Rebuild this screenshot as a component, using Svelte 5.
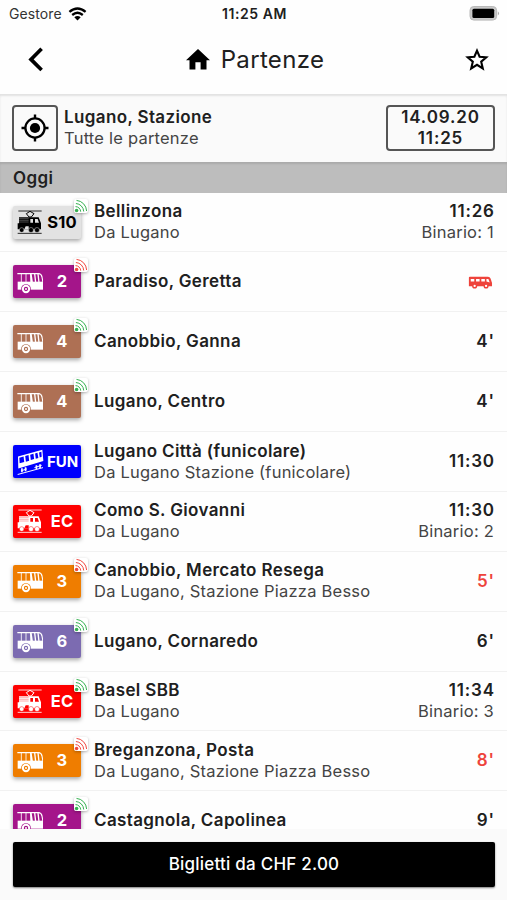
<script>
	const departures = [
		{ line: 'S10', icon: 'train', color: 'grey', signal: 'green', to: 'Bellinzona', from: 'Da Lugano', time: '11:26', track: 'Binario: 1' },
		{ line: '2', icon: 'bus', color: 'magenta', signal: 'red', to: 'Paradiso, Geretta', vehicle: true },
		{ line: '4', icon: 'bus', color: 'brown', signal: 'green', to: 'Canobbio, Ganna', time: "4'" },
		{ line: '4', icon: 'bus', color: 'brown', signal: 'green', to: 'Lugano, Centro', time: "4'" },
		{ line: 'FUN', icon: 'funicular', color: 'blue', to: 'Lugano Città (funicolare)', from: 'Da Lugano Stazione (funicolare)', time: '11:30' },
		{ line: 'EC', icon: 'train', color: 'red', to: 'Como S. Giovanni', from: 'Da Lugano', time: '11:30', track: 'Binario: 2' },
		{ line: '3', icon: 'bus', color: 'orange', signal: 'red', to: 'Canobbio, Mercato Resega', from: 'Da Lugano, Stazione Piazza Besso', time: "5'", late: true },
		{ line: '6', icon: 'bus', color: 'violet', signal: 'green', to: 'Lugano, Cornaredo', time: "6'" },
		{ line: 'EC', icon: 'train', color: 'red', signal: 'green', to: 'Basel SBB', from: 'Da Lugano', time: '11:34', track: 'Binario: 3' },
		{ line: '3', icon: 'bus', color: 'orange', signal: 'red', to: 'Breganzona, Posta', from: 'Da Lugano, Stazione Piazza Besso', time: "8'", late: true },
		{ line: '2', icon: 'bus', color: 'magenta', signal: 'green', to: 'Castagnola, Capolinea', time: "9'" }
	]
</script>

<div class="screen">
	<div class="status-bar">
		<span class="carrier">
			Gestore
			<svg width="19" height="14" viewBox="0 0 19 14">
				<path d="M1.4 4.9 Q9.5 -2 17.6 4.9 M4.2 8 Q9.5 3.6 14.8 8" fill="none" stroke="#000" stroke-width="2.3" />
				<path d="M9.5 13.6 L6.3 10.3 Q9.5 7.7 12.7 10.3 Z" />
			</svg>
		</span>
		<span class="clock">11:25 AM</span>
		<svg class="battery" width="31" height="15" viewBox="0 0 31 15">
			<rect x="1" y="0.5" width="26.6" height="13.6" rx="3.8" fill="#c9c9c9" stroke="#b9b9b9" stroke-width="1" />
			<rect x="3.4" y="2.7" width="21.8" height="9.2" rx="1.5" />
			<path d="M28.8 5.2 Q31.2 7.4 28.8 9.6 Z" fill="#aaa" />
		</svg>
	</div>

	<header class="nav">
		<button class="icon-btn" aria-label="Indietro">
			<svg width="16" height="25" viewBox="0 0 16 25"><path d="M13.6 1.8 L3 12.4 L13.6 23" fill="none" stroke="#000" stroke-width="3.7" /></svg>
		</button>
		<h1>
			<svg width="24" height="21" viewBox="0 0 24 21"><path d="M12 0 L24 11.2 H20.5 V20.6 H14.6 V13.3 H9.4 V20.6 H3.5 V11.2 H0 Z" /></svg>
			<span>Partenze</span>
		</h1>
		<button class="icon-btn" aria-label="Preferiti">
			<svg width="24" height="23" viewBox="0 0 24 23"><path d="M12 2.7 L14.6 8.7 L21.3 9.3 L16.2 13.7 L17.8 20.4 L12 16.8 L6.2 20.4 L7.8 13.7 L2.7 9.3 L9.4 8.7 Z" fill="none" stroke="#000" stroke-width="2.1" /></svg>
		</button>
	</header>

	<section class="stop">
		<button class="locate" aria-label="Posizione">
			<svg width="28" height="28" viewBox="0 0 28 28">
				<circle cx="14" cy="14" r="9.6" fill="none" stroke="#000" stroke-width="2.3" />
				<circle cx="14" cy="14" r="5.1" />
				<path d="M14 0.5 V4.5 M14 23.5 V27.5 M0.5 14 H4.5 M23.5 14 H27.5" stroke="#000" stroke-width="2.4" />
			</svg>
		</button>
		<div class="stop-text">
			<strong>Lugano, Stazione</strong>
			<span>Tutte le partenze</span>
		</div>
		<button class="date">
			<span>14.09.20</span>
			<span>11:25</span>
		</button>
	</section>

	<h2 class="day">Oggi</h2>

	<div class="list">
		{#each departures as d}
			<div class="row">
				<div class="badge {d.color}">
					{#if d.icon === 'train'}
						<svg class="pict" viewBox="0 0 78 72">
							<path d="M4 3 H74 M2 70 H74" stroke="currentColor" stroke-width="2.5" />
							<path d="M28 11 L39 4 L51 11 L43 21 H36 Z" fill="none" stroke="currentColor" stroke-width="3" />
							<path d="M6 22 H65 L72 40 V58 H2 V40 H6 Z" fill="currentColor" />
							<path d="M6 26 H35 M6 31 H35 M6 36 H35" stroke="var(--bg)" stroke-width="1.6" opacity="0.6" />
							<path d="M40 27 H48 V38 H40 Z M54 27 H62 L66 38 H54 Z" fill="var(--bg)" />
							<path d="M26 49 H35 V58 H22 Z" fill="var(--bg)" />
							<g fill="currentColor" stroke="var(--bg)" stroke-width="1.4">
								<circle cx="14" cy="60" r="7" />
								<circle cx="42" cy="60" r="7.5" />
								<circle cx="60" cy="60" r="7.5" />
							</g>
						</svg>
					{:else if d.icon === 'bus'}
						<svg class="pict" viewBox="0 0 78 72">
							<path d="M1 11 H66 Q73 12 75 21 L78 37" fill="none" stroke="currentColor" stroke-width="3.5" />
							<path d="M13 11 V36 M27 11 V36" stroke="currentColor" stroke-width="2.5" />
							<path d="M39 11 H44 L48 38 H40 Z M51 11 H55 L58 38 H54 Z M61 11 H65 L68 38 H64 Z" fill="currentColor" />
							<path d="M2 35 H78 V59 H2 Z" fill="currentColor" />
							<circle cx="27" cy="57" r="14.5" fill="var(--bg)" />
							<circle cx="27" cy="57" r="9.5" fill="none" stroke="currentColor" stroke-width="6" />
							<circle cx="27" cy="57" r="3" fill="currentColor" />
						</svg>
					{:else}
						<svg class="pict fun" viewBox="0 0 82 78">
							<path d="M3 22 L77 2 L80 36 L4 59 Z" fill="currentColor" />
							<path d="M7 26 L20 22 L22 39 L8 43 Z M25 21 L35 18 L37 35 L27 38 Z M40 17 L50 14 L52 30 L42 33 Z M55 13 L62 11 L65 27 L57 29 Z M67 10 L74 8 L75 23 L69 25 Z" fill="var(--bg)" />
							<path d="M12 66 L30 60 M53 56 L75 49 M2 77 L79 56" stroke="currentColor" stroke-width="3" />
							<path d="M15 58 V70 M26 55 V67 M59 49 V60 M70 46 V57" stroke="currentColor" stroke-width="5" />
						</svg>
					{/if}
					<span class="line" class:fun-line={d.icon === 'funicular'}>{d.line}</span>
					{#if d.signal}
						<span class="signal {d.signal}">
							<svg width="14" height="14" viewBox="0 0 14 14">
								<circle cx="2.6" cy="11.5" r="1.8" fill="currentColor" />
								<path d="M1.5 7.6 A5.2 5.2 0 0 1 6.7 12.7 M1.9 4.5 A8.3 8.3 0 0 1 9.7 12.5 M2.5 1.4 A11 11 0 0 1 12.6 12" fill="none" stroke="currentColor" stroke-width="1" />
							</svg>
						</span>
					{/if}
				</div>
				<div class="names">
					<strong>{d.to}</strong>
					{#if d.from}<span>{d.from}</span>{/if}
				</div>
				<div class="when" class:late={d.late}>
					{#if d.vehicle}
						<svg class="van" width="25" height="13" viewBox="0 0 26 14">
							<path d="M0.5 1.7 Q0.5 0.7 1.5 0.7 H21 Q23.5 0.7 24.3 4 L25.4 7.5 V11 H0.5 Z" fill="#ee433b" />
							<path d="M2.5 3.3 H6.3 V6 H2.5 Z M8.2 3.3 H12 V6 H8.2 Z M13.9 3.3 H17.7 V6 H13.9 Z M19.4 3.3 H21.5 L22.9 7 L19.4 5.8 Z" fill="#fff" />
							<circle cx="6.7" cy="10.7" r="2" fill="#fff" stroke="#ee433b" stroke-width="1.5" />
							<circle cx="19" cy="10.7" r="2" fill="#fff" stroke="#ee433b" stroke-width="1.5" />
						</svg>
					{:else}
						<strong>{d.time}</strong>
						{#if d.track}<span>{d.track}</span>{/if}
					{/if}
				</div>
			</div>
		{/each}
	</div>

	<footer>
		<button class="tickets">Biglietti da CHF 2.00</button>
	</footer>
</div>

<style>
	:global(body) {
		background: #fff;
	}
	.screen {
		width: 507px;
		height: 900px;
		display: flex;
		flex-direction: column;
		overflow: hidden;
		background: #fefefe;
		color: #202020;
		font-family: Inter, sans-serif;
		font-size: 16.5px;
		line-height: 21px;
		letter-spacing: 0.22px;
	}
	button {
		font: inherit;
		letter-spacing: inherit;
		color: inherit;
		background: none;
		border: 0;
		padding: 0;
	}
	strong {
		font-size: 17px;
		font-weight: 600;
		letter-spacing: 0.37px;
	}
	svg {
		display: block;
		flex-shrink: 0;
	}

	/* Status bar and title */
	.status-bar {
		height: 27px;
		flex-shrink: 0;
		display: grid;
		grid-template-columns: 1fr auto 1fr;
		align-items: center;
		padding: 0 7px 0 9px;
		font-size: 14px;
		letter-spacing: 0.1px;
	}
	.carrier {
		display: flex;
		align-items: center;
		gap: 6px;
		color: #333;
	}
	.clock {
		font-weight: 600;
		letter-spacing: 0.55px;
	}
	.battery {
		justify-self: end;
	}
	.nav {
		height: 67px;
		flex-shrink: 0;
		box-sizing: border-box;
		display: flex;
		align-items: center;
		justify-content: space-between;
		padding: 0 17px 2px 23px;
	}
	.icon-btn {
		width: 25px;
		display: flex;
		justify-content: center;
	}
	h1 {
		margin: 0 3px 0 0;
		display: flex;
		align-items: center;
		gap: 11px;
		font-size: 24px;
		font-weight: 400;
		line-height: 30px;
		letter-spacing: 0.35px;
	}

	/* Selected stop */
	.stop {
		height: 68px;
		flex-shrink: 0;
		box-sizing: border-box;
		display: flex;
		align-items: center;
		gap: 6px;
		padding: 0 12px;
		background: #fafafa;
		box-shadow: inset 0 2px 2px #e2e2e2;
	}
	.locate,
	.date {
		height: 46px;
		box-sizing: border-box;
		display: flex;
		align-items: center;
		justify-content: center;
		border: 2px solid #555;
		border-radius: 4px;
	}
	.locate {
		width: 46px;
	}
	.stop-text {
		flex: 1;
		display: flex;
		flex-direction: column;
	}
	.stop-text span,
	.names span,
	.when span {
		color: #444;
	}
	.date {
		width: 109px;
		flex-direction: column;
		font-size: 17px;
		font-weight: 600;
		letter-spacing: 0.85px;
	}
	.day {
		height: 30.6px;
		flex-shrink: 0;
		box-sizing: border-box;
		margin: 0;
		padding: 6px 13px;
		background: #bdbdbd;
		box-shadow: inset 0 2px 2px #aaa;
		font-size: 17px;
		font-weight: 600;
		letter-spacing: 0.4px;
	}

	/* Departures */
	.list {
		flex: 1;
		min-height: 0;
		overflow: hidden;
	}
	.row {
		height: 59.88px;
		box-sizing: border-box;
		display: flex;
		align-items: center;
		padding: 0 13px;
		border-bottom: 1px solid #f1f1f1;
	}
	.badge {
		position: relative;
		width: 68px;
		height: 33px;
		box-sizing: border-box;
		flex-shrink: 0;
		display: flex;
		align-items: center;
		padding-left: 4px;
		margin-right: 13px;
		background: var(--bg);
		color: #fff;
		border-radius: 2px;
		box-shadow: 0 2px 4px rgba(0, 0, 0, 0.35);
	}
	.grey { --bg: #e2e2e2; color: #000; }
	.magenta { --bg: #a4158a; }
	.brown { --bg: #ae7054; }
	.blue { --bg: #0000fe; }
	.badge.red { --bg: #fe0000; }
	.orange { --bg: #ef7d00; }
	.violet { --bg: #7c6bb1; }
	.pict {
		width: 26px;
		height: 24px;
	}
	.pict.fun {
		width: 27px;
		height: 26px;
	}
	.line {
		flex: 1;
		text-align: center;
		font-weight: 700;
	}
	.fun-line {
		font-size: 15px;
		letter-spacing: 0;
	}
	.signal {
		position: absolute;
		top: -7px;
		right: -7px;
		width: 14px;
		height: 14px;
		background: #fff;
		border-radius: 2px;
		box-shadow: 0 1px 3px rgba(0, 0, 0, 0.3);
	}
	.signal.green { color: #35b050; }
	.signal.red { color: #f0473f; }
	.names {
		flex: 1;
		display: flex;
		flex-direction: column;
	}
	.when {
		display: flex;
		flex-direction: column;
		align-items: flex-end;
	}
	.when strong {
		letter-spacing: 0.8px;
		margin-right: -0.8px;
	}
	.when.late strong {
		color: #ee433b;
	}
	.van {
		margin: 2px 1px 0 0;
	}

	/* Ticket button */
	footer {
		height: 71px;
		flex-shrink: 0;
		box-sizing: border-box;
		padding: 13px 12px 0 13px;
		background: #fafafa;
	}
	.tickets {
		width: 100%;
		height: 45px;
		background: #000;
		color: #fff;
		border-radius: 2px;
		font-size: 17px;
		font-weight: 500;
		letter-spacing: 0.22px;
		box-shadow: 0 1px 2px rgba(0, 0, 0, 0.5);
	}
</style>
